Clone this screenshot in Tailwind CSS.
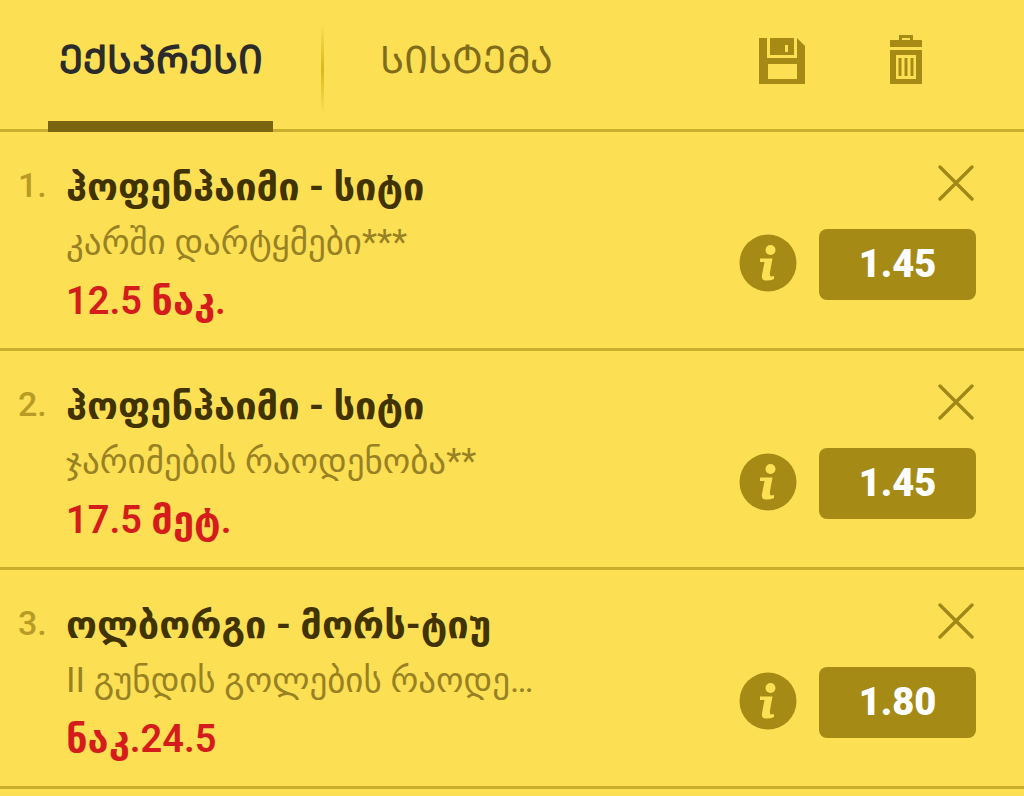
<!DOCTYPE html>
<html lang="ka">
<head>
<meta charset="utf-8">
<meta name="viewport" content="width=device-width, initial-scale=1">
<title>ბილეთი</title>
<script src="https://cdn.jsdelivr.net/npm/@tailwindcss/browser@4"></script>
</head>
<body class="min-h-screen bg-[#fddf54] font-['Roboto','Noto_Sans','DejaVu_Sans',sans-serif]">
<svg class="hidden" aria-hidden="true">
  <symbol id="close" viewBox="0 0 36 36"><path d="M2 2 34 34M34 2 2 34" fill="none" stroke="#a08818" stroke-width="3.4" stroke-linecap="round"/></symbol>
  <symbol id="info" viewBox="0 0 58 58"><circle cx="29" cy="29" r="28.5" fill="#a58b16"/><circle cx="31.500" cy="16" r="5" fill="#fddf54"/><path d="M21 24.500H33.500L31 38Q30.500 42.500 32 42.500L35 42V45Q31 47 26 46.500Q22 46 23 41L25.500 28H21Z" fill="#fddf54"/></symbol>
</svg>
<header class="flex h-[132px] items-stretch border-b-3 border-[#c9ad2c] pl-12 pr-[102px]">
  <nav class="flex">
    <button class="-mb-[3px] w-[225px] border-b-11 border-[#79640f] text-[39px] font-bold text-[#2b2b2b]">ᲔᲥᲡᲞᲠᲔᲡᲘ</button>
    <span class="ml-12 mt-6 h-[90px] w-[3px] bg-linear-to-b from-transparent via-[#d9b71f] to-transparent"></span>
    <button class="ml-12 px-2 pb-2 text-[38px] font-light text-[#7f6b19]">ᲡᲘᲡᲢᲔᲛᲐ</button>
  </nav>
  <div class="ml-auto flex items-start gap-[85px] pt-[35px]">
    <button aria-label="შენახვა" class="mt-[3px]">
      <svg class="h-[46px] w-[46px]" viewBox="0 0 46 46"><path fill="#a58b16" d="M0 0H38L46 8V46H0Z"/><path fill="#fddf54" d="M8 0H38V20H8Z"/><path fill="#a58b16" d="M11 0H35V17H11Z"/><path fill="#fddf54" d="M26 7H29V14H26ZM9 26H38V41H9Z"/></svg>
    </button>
    <button aria-label="წაშლა">
      <svg class="h-[49px] w-8" viewBox="0 0 32 49"><path fill="#a58b16" fill-rule="evenodd" d="M9 0H23V5H32V12H0V5H9ZM12 3V5H20V3ZM0 15H32V49H0ZM6 20V44H26V20Z"/><path fill="#a58b16" d="M8.500 23H11.500V41H8.500ZM14.500 23H17.500V41H14.500ZM20.500 23H23.500V41H20.500Z"/></svg>
    </button>
  </div>
</header>
<main>
<ol>
  <li class="flex border-b-3 border-[#c9ad2c] pb-[18px] pl-[18px] pr-12 pt-7">
    <span class="w-12 shrink-0 text-[34px] leading-[50px] font-medium text-[#b79b25]">1.</span>
    <div class="min-w-0 flex-1">
      <h2 class="truncate text-[38px] leading-[54px] font-bold text-[#403300]">ჰოფენჰაიმი - სიტი</h2>
      <p class="truncate text-[35px] leading-[58px] text-[#978123]">კარში დარტყმები***</p>
      <p class="truncate text-[38px] leading-[58px] font-semibold text-[#d51c1c]">12.5 ნაკ.</p>
    </div>
    <div class="flex flex-col items-end gap-7 pt-[5px]">
      <button aria-label="წაშლა" class="pr-0.5"><svg class="h-9 w-9"><use href="#close"/></svg></button>
      <div class="flex items-center gap-[22px]">
        <button aria-label="ინფორმაცია" class="mb-1"><svg class="h-[58px] w-[58px]"><use href="#info"/></svg></button>
        <button class="h-[71px] w-[157px] rounded-lg bg-[#a58b16] text-[38px] font-black text-white">1.45</button>
      </div>
    </div>
  </li>
  <li class="flex border-b-3 border-[#c9ad2c] pb-[18px] pl-[18px] pr-12 pt-7">
    <span class="w-12 shrink-0 text-[34px] leading-[50px] font-medium text-[#b79b25]">2.</span>
    <div class="min-w-0 flex-1">
      <h2 class="truncate text-[38px] leading-[54px] font-bold text-[#403300]">ჰოფენჰაიმი - სიტი</h2>
      <p class="truncate text-[35px] leading-[58px] text-[#978123]">ჯარიმების რაოდენობა**</p>
      <p class="truncate text-[38px] leading-[58px] font-semibold text-[#d51c1c]">17.5 მეტ.</p>
    </div>
    <div class="flex flex-col items-end gap-7 pt-[5px]">
      <button aria-label="წაშლა" class="pr-0.5"><svg class="h-9 w-9"><use href="#close"/></svg></button>
      <div class="flex items-center gap-[22px]">
        <button aria-label="ინფორმაცია" class="mb-1"><svg class="h-[58px] w-[58px]"><use href="#info"/></svg></button>
        <button class="h-[71px] w-[157px] rounded-lg bg-[#a58b16] text-[38px] font-black text-white">1.45</button>
      </div>
    </div>
  </li>
  <li class="flex border-b-3 border-[#c9ad2c] pb-[18px] pl-[18px] pr-12 pt-7">
    <span class="w-12 shrink-0 text-[34px] leading-[50px] font-medium text-[#b79b25]">3.</span>
    <div class="min-w-0 flex-1">
      <h2 class="truncate text-[38px] leading-[54px] font-bold text-[#403300]">ოლბორგი - მორს-ტიუ</h2>
      <p class="truncate text-[35px] leading-[58px] text-[#978123]">II გუნდის გოლების რაოდე…</p>
      <p class="truncate text-[38px] leading-[58px] font-semibold text-[#d51c1c]">ნაკ.24.5</p>
    </div>
    <div class="flex flex-col items-end gap-7 pt-[5px]">
      <button aria-label="წაშლა" class="pr-0.5"><svg class="h-9 w-9"><use href="#close"/></svg></button>
      <div class="flex items-center gap-[22px]">
        <button aria-label="ინფორმაცია" class="mb-1"><svg class="h-[58px] w-[58px]"><use href="#info"/></svg></button>
        <button class="h-[71px] w-[157px] rounded-lg bg-[#a58b16] text-[38px] font-black text-white">1.80</button>
      </div>
    </div>
  </li>
</ol>
</main>
</body>
</html>
